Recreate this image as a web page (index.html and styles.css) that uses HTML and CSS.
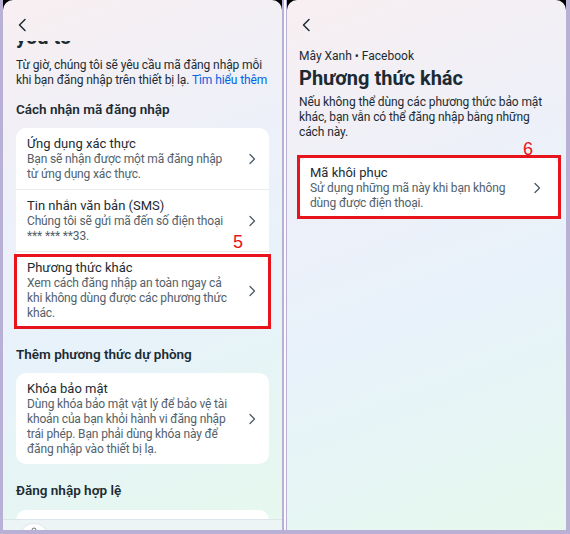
FILE: index.html
```html
<!DOCTYPE html>
<html lang="vi">
<head>
    <meta charset="UTF-8">
    <meta name="viewport" content="width=device-width, initial-scale=1.0">
    <title>Phương thức khác</title>
    <link rel="stylesheet" href="styles.css">
</head>
<body>
    <div class="phone">
        <div class="screen">
            <div class="topbar">
                <svg class="back" width="10" height="14" viewBox="0 0 10 14"><path d="M8 1.5 L2.5 7 L8 12.5" fill="none" stroke="#1c2b33" stroke-width="1.5" stroke-linecap="round" stroke-linejoin="round"/></svg>
            </div>
            <div class="cut-title"><span>you to</span></div>
            <div class="content">
                <p class="lead">Từ giờ, chúng tôi sẽ yêu cầu mã đăng nhập mỗi<br>khi bạn đăng nhập trên thiết bị lạ. <a href="#">Tìm hiểu thêm</a></p>

                <h2 class="section">Cách nhận mã đăng nhập</h2>
                <div class="card">
                    <div class="item">
                        <div class="item-text">
                            <div class="item-title">Ứng dụng xác thực</div>
                            <div class="item-desc">Bạn sẽ nhận được một mã đăng nhập<br>từ ứng dụng xác thực.</div>
                        </div>
                        <svg class="chev" width="8" height="12" viewBox="0 0 8 12"><path d="M2 1.5 L6.5 6 L2 10.5" fill="none" stroke="#4b5b66" stroke-width="1.3" stroke-linecap="round" stroke-linejoin="round"/></svg>
                    </div>
                    <div class="item">
                        <div class="item-text">
                            <div class="item-title">Tin nhắn văn bản (SMS)</div>
                            <div class="item-desc">Chúng tôi sẽ gửi mã đến số điện thoại<br>*** *** **33.</div>
                        </div>
                        <svg class="chev" width="8" height="12" viewBox="0 0 8 12"><path d="M2 1.5 L6.5 6 L2 10.5" fill="none" stroke="#4b5b66" stroke-width="1.3" stroke-linecap="round" stroke-linejoin="round"/></svg>
                    </div>
                    <div class="item marked">
                        <span class="mark-num">5</span>
                        <div class="item-text">
                            <div class="item-title">Phương thức khác</div>
                            <div class="item-desc">Xem cách đăng nhập an toàn ngay cả<br>khi không dùng được các phương thức<br>khác.</div>
                        </div>
                        <svg class="chev" width="8" height="12" viewBox="0 0 8 12"><path d="M2 1.5 L6.5 6 L2 10.5" fill="none" stroke="#4b5b66" stroke-width="1.3" stroke-linecap="round" stroke-linejoin="round"/></svg>
                    </div>
                </div>

                <h2 class="section">Thêm phương thức dự phòng</h2>
                <div class="card">
                    <div class="item">
                        <div class="item-text">
                            <div class="item-title">Khóa bảo mật</div>
                            <div class="item-desc">Dùng khóa bảo mật vật lý để bảo vệ tài<br>khoản của bạn khỏi hành vi đăng nhập<br>trái phép. Bạn phải dùng khóa này để<br>đăng nhập vào thiết bị lạ.</div>
                        </div>
                        <svg class="chev" width="8" height="12" viewBox="0 0 8 12"><path d="M2 1.5 L6.5 6 L2 10.5" fill="none" stroke="#4b5b66" stroke-width="1.3" stroke-linecap="round" stroke-linejoin="round"/></svg>
                    </div>
                </div>

                <h2 class="section">Đăng nhập hợp lệ</h2>
                <div class="card card-tail"></div>
            </div>
            <div class="bottombar">
                <div class="fab">
                    <svg width="10" height="8" viewBox="0 0 10 8"><circle cx="5" cy="3" r="2" fill="none" stroke="#65737d" stroke-width="1"/></svg>
                </div>
            </div>
        </div>
    </div>

    <div class="sep"></div>

    <div class="phone phone-right">
        <div class="screen">
            <div class="topbar">
                <svg class="back" width="10" height="14" viewBox="0 0 10 14"><path d="M8 1.5 L2.5 7 L8 12.5" fill="none" stroke="#1c2b33" stroke-width="1.5" stroke-linecap="round" stroke-linejoin="round"/></svg>
            </div>
            <div class="content content-right">
                <div class="account">Mây Xanh • Facebook</div>
                <h1 class="page-title">Phương thức khác</h1>
                <p class="lead">Nếu không thể dùng các phương thức bảo mật<br>khác, bạn vẫn có thể đăng nhập bằng những<br>cách này.</p>

                <div class="card card-single">
                    <div class="item marked marked-full">
                        <span class="mark-num">6</span>
                        <div class="item-text">
                            <div class="item-title">Mã khôi phục</div>
                            <div class="item-desc">Sử dụng những mã này khi bạn không<br>dùng được điện thoại.</div>
                        </div>
                        <svg class="chev" width="8" height="12" viewBox="0 0 8 12"><path d="M2 1.5 L6.5 6 L2 10.5" fill="none" stroke="#4b5b66" stroke-width="1.3" stroke-linecap="round" stroke-linejoin="round"/></svg>
                    </div>
                </div>
            </div>
        </div>
    </div>
</body>
</html>
```

FILE: styles.css
```css
body {
    margin: 0;
    padding-left: 3px;
    width: 567px;
    height: 534px;
    background: #b9b0d6;
    display: flex;
    align-items: flex-start;
    overflow: hidden;
    font-family: Roboto, "Noto Sans", sans-serif;
    color: #1c2b33;
}
.phone {
    width: 279px;
    height: 530px;
    background: #000;
}
.phone-right {
    margin-left: 1px;
}
.sep {
    width: 2px;
    height: 530px;
    margin-left: 2px;
    background: #fbfbfd;
}
.screen {
    position: relative;
    height: 100%;
    border-radius: 10px 10px 0 0;
    overflow: hidden;
    background: linear-gradient(160deg, #f8eff1 0%, #edf0f9 35%, #e7f2fa 60%, #e6f6f2 85%, #e6f8ee 100%);
}
.topbar {
    height: 41px;
    padding-left: 14px;
    display: flex;
    align-items: center;
}
.back {
    margin-top: 9px;
}
.cut-title {
    height: 7px;
    overflow: hidden;
    padding-left: 13px;
}
.cut-title span {
    display: block;
    margin-top: -15px;
    font-size: 20px;
    line-height: 22px;
    font-weight: 700;
}
.content {
    padding: 0 13px;
}
.lead {
    margin: 10px 0 0;
    font-size: 12px;
    letter-spacing: -0.1px;
    line-height: 15px;
    white-space: nowrap;
    color: #1c2b33;
}
.lead a {
    color: #0064e0;
    text-decoration: none;
}
.section {
    margin: 12px 0 10px;
    font-size: 13.5px;
    line-height: 18px;
    font-weight: 600;
}
.card {
    background: #fff;
    border-radius: 10px;
}
.card + .section {
    margin-top: 17px;
}
.item {
    position: relative;
    display: flex;
    align-items: center;
    padding: 8px 13px 7px 11px;
}
.item + .item {
    border-top: 1px solid #e8ecef;
}
.item-text {
    flex: 1;
}
.item-title {
    font-size: 13px;
    line-height: 16px;
    white-space: nowrap;
}
.item-desc {
    font-size: 12px;
    letter-spacing: -0.15px;
    line-height: 15px;
    white-space: nowrap;
    color: #52616b;
}
.chev {
    flex: none;
}
.marked::after {
    content: "";
    position: absolute;
    top: 2px;
    bottom: -1px;
    left: -2px;
    right: -2px;
    border: 3px solid #e8141b;
    pointer-events: none;
}
.mark-num {
    position: absolute;
    right: 26px;
    top: -19px;
    font-family: "Liberation Sans", sans-serif;
    font-size: 18px;
    line-height: 18px;
    color: #e8141b;
}
.card-tail {
    height: 30px;
    margin-top: 11px;
}
.bottombar {
    position: absolute;
    left: 0;
    right: 0;
    bottom: 0;
    height: 10px;
    background: rgba(236, 243, 246, 0.95);
    border-top: 1px solid #dde5ea;
}
.fab {
    position: absolute;
    left: 17px;
    top: 4px;
    width: 28px;
    height: 28px;
    border-radius: 50%;
    background: #fff;
    box-shadow: 0 0 2px rgba(0, 0, 0, 0.15);
    display: flex;
    justify-content: center;
    padding-top: 3px;
    box-sizing: border-box;
}
.content-right {
    padding: 0 12px;
}
.account {
    margin-top: 7px;
    font-size: 12px;
    line-height: 16px;
}
.page-title {
    margin: 2px 0 0;
    font-size: 20px;
    line-height: 24px;
    font-weight: 700;
}
.content-right .lead {
    margin-top: 5px;
}
.card-single {
    margin-top: 17px;
    margin-right: -5px;
}
.marked-full {
    padding-right: 18px;
}
.marked-full::after {
    top: -2px;
    bottom: -1px;
}
.content-right .mark-num {
    top: -17px;
    right: 26px;
}
```
